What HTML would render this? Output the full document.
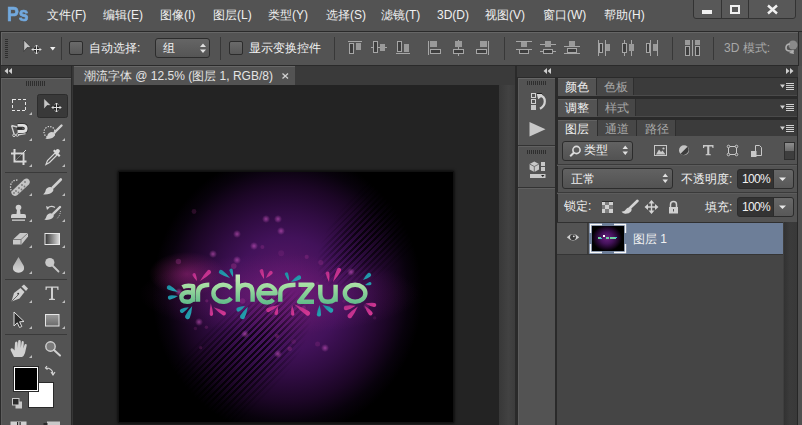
<!DOCTYPE html>
<html><head><meta charset="utf-8">
<style>
*{margin:0;padding:0;box-sizing:border-box}
html,body{width:802px;height:425px;overflow:hidden;background:#535353;font-family:"Liberation Sans",sans-serif;position:relative}
.a{position:absolute}
.t{position:absolute;white-space:nowrap;font-size:12px;line-height:14px;color:#f0f0f0}
svg{position:absolute;overflow:visible}
</style></head><body>

<!-- MENU BAR -->
<div class="a" style="left:0;top:0;width:802px;height:31px;background:#535353"></div>
<div class="t" style="left:7px;top:3px;font-size:21px;line-height:21px;font-weight:bold;color:#72a9de;-webkit-text-stroke:0.7px #72a9de;transform:scaleX(0.84);transform-origin:0 0">Ps</div>
<div class="t" style="left:47px;top:8px">文件(F)</div>
<div class="t" style="left:103px;top:8px">编辑(E)</div>
<div class="t" style="left:160px;top:8px">图像(I)</div>
<div class="t" style="left:213px;top:8px">图层(L)</div>
<div class="t" style="left:268px;top:8px">类型(Y)</div>
<div class="t" style="left:326px;top:8px">选择(S)</div>
<div class="t" style="left:381px;top:8px">滤镜(T)</div>
<div class="t" style="left:437px;top:8px">3D(D)</div>
<div class="t" style="left:485px;top:8px">视图(V)</div>
<div class="t" style="left:543px;top:8px">窗口(W)</div>
<div class="t" style="left:604px;top:8px">帮助(H)</div>

<!-- window buttons -->
<div class="a" style="left:693px;top:-2px;width:103px;height:21px;border:1px solid #333;border-radius:0 0 3px 3px;background:#585858"></div>
<div class="a" style="left:721px;top:0;width:1px;height:18px;background:#333"></div>
<div class="a" style="left:748px;top:0;width:1px;height:18px;background:#333"></div>
<div class="a" style="left:702px;top:10px;width:10px;height:4px;background:#f0f0f0"></div>
<div class="a" style="left:730px;top:5px;width:10px;height:9px;border:2px solid #f0f0f0"></div>
<svg style="left:767px;top:5px" width="11" height="9"><path d="M1 0.5 L10 8.5 M10 0.5 L1 8.5" stroke="#f0f0f0" stroke-width="2.4"/></svg>

<div class="a" style="left:0;top:31px;width:802px;height:1px;background:#2a2a2a"></div>

<!-- OPTIONS BAR -->
<div class="a" style="left:0;top:32px;width:802px;height:393px;background:#2a2a2a"></div>
<div class="a" style="left:1px;top:32px;width:797px;height:33px;background:#535353;border-top:1px solid #666;border-left:1px solid #666"></div>
<div class="a" style="left:798px;top:32px;width:4px;height:34px;background:#4c4c4c;border-left:1px solid #2a2a2a"></div>


<!-- options content -->
<svg style="left:0;top:0" width="802" height="425" shape-rendering="crispEdges">
 <g fill="#2e2e2e">
  <rect x="5" y="39" width="3" height="1"/><rect x="5" y="41" width="3" height="1"/><rect x="5" y="43" width="3" height="1"/><rect x="5" y="45" width="3" height="1"/><rect x="5" y="47" width="3" height="1"/><rect x="5" y="49" width="3" height="1"/><rect x="5" y="51" width="3" height="1"/><rect x="5" y="53" width="3" height="1"/><rect x="5" y="55" width="3" height="1"/><rect x="5" y="57" width="3" height="1"/>
 </g>
 <!-- separators -->
 <g fill="#383838">
  <rect x="61" y="37" width="1" height="23"/><rect x="220" y="37" width="1" height="23"/><rect x="334" y="37" width="1" height="23"/><rect x="504" y="37" width="1" height="23"/><rect x="672" y="37" width="1" height="23"/><rect x="713" y="37" width="1" height="23"/>
 </g>
 <!-- align icons -->
 <g fill="#a6a6a6">
  <rect x="348" y="41" width="14" height="1"/>
  <rect x="371" y="47" width="16" height="1"/>
  <rect x="396" y="53" width="14" height="1"/>
  <rect x="428" y="41" width="1" height="14"/>
  <rect x="458" y="40" width="1" height="16"/>
  <rect x="488" y="41" width="1" height="14"/>
  <rect x="516" y="41" width="16" height="1"/><rect x="516" y="49" width="16" height="1"/>
  <rect x="540" y="44" width="16" height="1"/><rect x="540" y="51" width="16" height="1"/>
  <rect x="564" y="46" width="16" height="1"/><rect x="564" y="53" width="16" height="1"/>
  <rect x="598" y="40" width="1" height="16"/><rect x="605" y="40" width="1" height="16"/>
  <rect x="624" y="40" width="1" height="16"/><rect x="631" y="40" width="1" height="16"/>
  <rect x="650" y="40" width="1" height="16"/><rect x="657" y="40" width="1" height="16"/>
  <rect x="692" y="40" width="1" height="16"/>
 </g>
 <g fill="#9a9a9a">
  <rect x="356" y="43" width="5" height="7"/>
  <rect x="380" y="44" width="5" height="7"/>
  <rect x="404" y="44" width="5" height="8"/>
  <rect x="430" y="41" width="7" height="6"/>
  <rect x="455" y="41" width="7" height="6"/>
  <rect x="480" y="41" width="7" height="6"/>
  <rect x="521" y="42" width="6" height="5"/>
  <rect x="545" y="41" width="6" height="6"/>
  <rect x="569" y="41" width="6" height="5"/>
  <rect x="606" y="44" width="4" height="7"/>
  <rect x="629" y="44" width="5" height="7"/>
  <rect x="653" y="44" width="4" height="7"/>
  <rect x="685" y="40" width="5" height="5"/><rect x="695" y="40" width="5" height="5"/>
 </g>
 <g fill="#3e3e3e" stroke="#a6a6a6" stroke-width="1" shape-rendering="auto">
  <rect x="349.5" y="43.5" width="4" height="10"/>
  <rect x="373.5" y="41.5" width="4" height="11"/>
  <rect x="397.5" y="41.5" width="4" height="10"/>
  <rect x="430.5" y="49.5" width="10" height="4"/>
  <rect x="453.5" y="49.5" width="10" height="4"/>
  <rect x="476.5" y="49.5" width="10" height="4"/>
  <rect x="519.5" y="49.5" width="9" height="4"/>
  <rect x="543.5" y="49.5" width="9" height="4"/>
  <rect x="567.5" y="48.5" width="9" height="4"/>
  <rect x="599.5" y="43.5" width="3" height="9"/>
  <rect x="622.5" y="43.5" width="4" height="9"/>
  <rect x="646.5" y="43.5" width="3" height="9"/>
  <rect x="685.5" y="46.5" width="4" height="9"/><rect x="695.5" y="46.5" width="4" height="9"/>
 </g>
 <!-- move tool icon -->
 <g shape-rendering="auto">
  <path d="M23.8 40 L31.2 47.6 L27 47.6 L23.8 51.4 Z" fill="#c6c6c6" stroke="#222" stroke-width="0.6"/>
  <path d="M36.5 45 V54 M32 49.5 H41" stroke="#222" stroke-width="2.6"/>
  <path d="M36.5 45 V54 M32 49.5 H41" stroke="#dedede" stroke-width="1"/>
  <path d="M35 46.5 L36.5 45 L38 46.5 M35 52.5 L36.5 54 L38 52.5 M33.5 48 L32 49.5 L33.5 51 M39.5 48 L41 49.5 L39.5 51" stroke="#dedede" stroke-width="1" fill="none"/>
  <path d="M50 47 L55.5 47 L52.75 50.5 Z" fill="#f0f0f0"/>
 </g>
 <!-- auto align 3D icon -->
 <g shape-rendering="auto">
  <circle cx="793" cy="45" r="4.5" fill="#8a8a8a"/>
  <path d="M786 48 Q786 44 790 44 M786 48 Q786 51 790 51 L794 51" stroke="#b0b0b0" stroke-width="1.6" fill="none"/>
  <path d="M789 53 L793 50 L794 54 Z" fill="#b0b0b0"/>
 </g>
</svg>
<!-- checkboxes -->
<div class="a" style="left:69px;top:41px;width:14px;height:14px;border:1px solid #2c2c2c;border-radius:2px;background:linear-gradient(#6a6a6a,#585858)"></div>
<div class="a" style="left:229px;top:41px;width:14px;height:14px;border:1px solid #2c2c2c;border-radius:2px;background:linear-gradient(#6a6a6a,#585858)"></div>
<div class="t" style="left:89px;top:41px">自动选择:</div>
<div class="a" style="left:155px;top:38px;width:55px;height:20px;border:1px solid #2c2c2c;border-radius:3px;background:linear-gradient(#656565,#555555)"></div>
<div class="t" style="left:163px;top:41px">组</div>
<svg style="left:200px;top:43px" width="6" height="11"><path d="M0 4 L3 0.5 L6 4 Z M0 6.5 L3 10 L6 6.5 Z" fill="#e0e0e0"/></svg>
<div class="t" style="left:249px;top:41px">显示变换控件</div>
<div class="t" style="left:724px;top:41px;color:#a8a8a8">3D 模式:</div>


<!-- LEFT TOOLBAR -->
<div class="a" style="left:1px;top:66px;width:70px;height:12px;background:#393939;border-bottom:1px solid #2a2a2a"></div>
<svg style="left:4px;top:68px" width="10" height="7"><path d="M0.5 3 L4 0 L4 6 Z M4.5 3 L8 0 L8 6 Z" fill="#cfcfcf"/></svg>
<div class="a" style="left:1px;top:78px;width:70px;height:347px;background:#535353;border-top:1px solid #666;border-left:1px solid #5e5e5e"></div>


<!-- TOOLBAR ICONS -->
<svg style="left:0;top:0" width="802" height="425">
 <g fill="#2e2e2e">
  <rect x="26" y="81" width="1" height="5"/><rect x="28" y="81" width="1" height="5"/><rect x="30" y="81" width="1" height="5"/><rect x="32" y="81" width="1" height="5"/><rect x="34" y="81" width="1" height="5"/><rect x="36" y="81" width="1" height="5"/><rect x="38" y="81" width="1" height="5"/><rect x="40" y="81" width="1" height="5"/><rect x="42" y="81" width="1" height="5"/><rect x="44" y="81" width="1" height="5"/>
 </g>
 <g fill="#3a3a3a">
  <rect x="5" y="172" width="62" height="1"/><rect x="5" y="279" width="62" height="1"/><rect x="5" y="334" width="62" height="1"/>
 </g>
 <g fill="#bdbdbd"><path d="M29 115 H32 V112 Z"/><path d="M29 141 H32 V138 Z"/><path d="M62 141 H65 V138 Z"/><path d="M29 167 H32 V164 Z"/><path d="M62 167 H65 V164 Z"/><path d="M29 196 H32 V193 Z"/><path d="M62 196 H65 V193 Z"/><path d="M29 222 H32 V219 Z"/><path d="M62 222 H65 V219 Z"/><path d="M29 248 H32 V245 Z"/><path d="M62 248 H65 V245 Z"/><path d="M29 274 H32 V271 Z"/><path d="M62 274 H65 V271 Z"/><path d="M29 303 H32 V300 Z"/><path d="M62 303 H65 V300 Z"/><path d="M29 329 H32 V326 Z"/><path d="M62 329 H65 V326 Z"/><path d="M29 358 H32 V355 Z"/></g>
 <!-- marquee -->
 <rect x="12.5" y="99.5" width="13" height="11" fill="none" stroke="#e6e6e6" stroke-width="1" stroke-dasharray="3 2" shape-rendering="crispEdges"/>
 <!-- move selected -->
 <rect x="37.5" y="94.5" width="30" height="23" rx="2" fill="#393939" stroke="#2c2c2c"/>
 <path d="M43.8 98.2 L51.2 105.6 L47 105.6 L43.8 109.4 Z" fill="#c6c6c6" stroke="#1e1e1e" stroke-width="0.6"/>
 <path d="M56.5 103 V112 M52 107.5 H61" stroke="#1e1e1e" stroke-width="2.6"/>
 <path d="M56.5 103 V112 M52 107.5 H61" stroke="#dedede" stroke-width="1"/>
 <path d="M55 104.5 L56.5 103 L58 104.5 M55 110.5 L56.5 112 L58 110.5 M53.5 106 L52 107.5 L53.5 109 M59.5 106 L61 107.5 L59.5 109" stroke="#dedede" stroke-width="1" fill="none"/>
 <!-- magnetic lasso -->
 <path d="M11.5 125.5 L14.5 135.5 L25.5 133.5 M11.5 125.5 L17.5 127" fill="none" stroke="#d0d0d0" stroke-width="1.3"/>
 <path d="M17.5 125.3 H22.8 Q26.2 125.3 26.2 128.4 Q26.2 131.5 22.8 131.5 H17.5" fill="none" stroke="#2a2a2a" stroke-width="4.2"/>
 <path d="M17.5 125.3 H22.8 Q26.2 125.3 26.2 128.4 Q26.2 131.5 22.8 131.5 H17.5" fill="none" stroke="#e0e0e0" stroke-width="2.8"/>
 <rect x="17" y="127.6" width="5" height="1.6" fill="#2a2a2a"/>
 <circle cx="14" cy="135.3" r="1.3" fill="#535353" stroke="#d0d0d0" stroke-width="1"/><circle cx="17.3" cy="135" r="1.3" fill="#535353" stroke="#d0d0d0" stroke-width="1"/>
 <!-- quick selection -->
 <circle cx="49.5" cy="132" r="5.5" fill="none" stroke="#e0e0e0" stroke-width="1.2" stroke-dasharray="1.3 1.3"/>
 <path d="M61.5 125.5 L54.5 132.5" stroke="#d0d0d0" stroke-width="2.4" stroke-linecap="round"/>
 <path d="M54 132.8 C51.7 131 48 132.8 47.4 135.5 C47 137.2 46.2 138.2 45.2 138.8 C49 139.2 52.8 138.5 54.7 135.8 C55.4 134.7 55.1 133.6 54 132.8 Z" fill="#d0d0d0"/>
 <!-- crop -->
 <path d="M14.5 149 V161.5 H26.5 M11 153.5 H23.5 V165" fill="none" stroke="#d8d8d8" stroke-width="2"/>
 <path d="M15.5 160.5 L26 150" stroke="#d8d8d8" stroke-width="1"/>
 <path d="M15.5 154.5 H22.5 V160.5 H15.5 Z" fill="#3a3a3a" opacity="0.6"/>
 <!-- eyedropper -->
 <path d="M46 164.5 L47.5 160.5 L55 153 L57 155 L49.5 162.5 Z" fill="none" stroke="#d8d8d8" stroke-width="1.2"/>
 <path d="M53 151 L59 157 L60.5 155.5 L58.5 153.5 Q61 151 59 149.5 Q57.5 148.2 55.5 150.5 L54.5 149.5 Z" fill="#d8d8d8"/>
 <!-- healing -->
 <path d="M17.5 180 Q11 180 10.5 186.5 Q10.5 191 13 193" fill="none" stroke="#e0e0e0" stroke-width="1.2" stroke-dasharray="1.3 1.3"/>
 <path d="M12.5 190.5 L24 179.5 Q27 177.5 29 179.8 Q30.8 182 28.8 184.6 L17.5 195 Q14.5 197 12.3 194.8 Q10.5 192.5 12.5 190.5 Z" fill="#c4c4c4"/>
 <g fill="#777"><circle cx="16" cy="191" r="0.9"/><circle cx="19" cy="188" r="0.9"/><circle cx="22" cy="185" r="0.9"/><circle cx="25" cy="182" r="0.9"/><circle cx="18.5" cy="192.5" r="0.9"/><circle cx="21.5" cy="189.5" r="0.9"/><circle cx="24.5" cy="186.5" r="0.9"/><circle cx="14" cy="193" r="0.9"/></g>
 <!-- brush -->
 <path d="M60.8 179.5 L52.8 187.5" stroke="#d0d0d0" stroke-width="2.6" stroke-linecap="round"/>
 <path d="M52.3 187.8 C50 186 46.2 187.8 45.6 190.6 C45.2 192.4 44.4 193.6 43.2 194.4 C47 194.8 51 194 53 191.2 C53.8 190 53.4 188.8 52.3 187.8 Z" fill="#d0d0d0"/>
 <!-- stamp -->
 <circle cx="18.5" cy="207.5" r="2.8" fill="#d0d0d0"/>
 <path d="M17 209 H20 L20.5 214 H24 Q26 214 26 216 V218 H11 V216 Q11 214 13 214 H16.5 Z" fill="#d0d0d0"/>
 <rect x="12" y="219.5" width="13" height="1.3" fill="#d0d0d0"/>
 <!-- history brush -->
 <path d="M60 207 L53.3 213.7" stroke="#d0d0d0" stroke-width="2.4" stroke-linecap="round"/>
 <path d="M52.8 214 C50.5 212.3 47 214 46.4 216.6 C46 218.2 45.2 219.2 44.2 219.8 C47.8 220.2 51.5 219.5 53.4 216.9 C54.1 215.8 53.8 214.8 52.8 214 Z" fill="#d0d0d0"/>
 <path d="M55 207.5 Q51 205 47.5 208" fill="none" stroke="#d0d0d0" stroke-width="1.2"/>
 <path d="M46 206 L47 210 L49.5 207.5 Z" fill="#d0d0d0"/>
 <path d="M60.5 211 Q60 216 57 218.5" fill="none" stroke="#d0d0d0" stroke-width="1" stroke-dasharray="1 1"/>
 <!-- eraser -->
 <path d="M13 239.5 L20 233 H28 L28 236.5 L21.5 244.5 H13 Z" fill="#c8c8c8"/>
 <path d="M13 239.5 H21 L28 233 M21 239.5 V244.5" fill="none" stroke="#6a6a6a" stroke-width="0.8"/>
 <!-- gradient -->
 <rect x="44.5" y="233" width="15.5" height="12" fill="#e8e8e8"/>
 <rect x="45.5" y="234" width="13.5" height="10" fill="url(#ggrad)"/>
 <defs><linearGradient id="ggrad" x1="0" x2="1"><stop offset="0" stop-color="#3a3a3a"/><stop offset="1" stop-color="#d8d8d8"/></linearGradient>
 <linearGradient id="grect" x1="0" y1="0" x2="0" y2="1"><stop offset="0" stop-color="#9a9a9a"/><stop offset="1" stop-color="#6a6a6a"/></linearGradient>
 <linearGradient id="gdrop" x1="0" y1="0" x2="0" y2="1"><stop offset="0" stop-color="#a8a8a8"/><stop offset="1" stop-color="#d8d8d8"/></linearGradient></defs>
 <!-- blur drop -->
 <path d="M18.5 257 Q15 263 13.2 266 Q12 270.5 15.5 272 Q18.5 273.3 21.5 272 Q25 270.5 23.8 266 Q22 263 18.5 257 Z" fill="url(#gdrop)"/>
 <!-- dodge -->
 <circle cx="49.8" cy="262.5" r="4.6" fill="#c8c8c8"/>
 <path d="M52.5 265.5 L58.5 271.5" stroke="#c8c8c8" stroke-width="1.8" stroke-linecap="round"/>
 <!-- pen -->
 <path d="M11.5 301.5 L14 293 L20.5 288 L24.5 292 L19.5 298.5 Z" fill="#d0d0d0"/>
 <path d="M21.5 286.5 L24 284.5 L28 288.5 L26 291 Z" fill="#d0d0d0"/>
 <circle cx="18.2" cy="293.8" r="1" fill="#3a3a3a"/>
 <path d="M11.8 301.2 L18 295" stroke="#3a3a3a" stroke-width="0.7"/>
 <!-- type T -->
 <path d="M45.5 286.5 H58.5 V290 H57.5 L57 287.8 H53 V298.5 L55 298.9 V300 H49 V298.9 L51 298.5 V287.8 H47 L46.5 290 H45.5 Z" fill="#d0d0d0"/>
 <!-- path select -->
 <path d="M14 312 V326 L17.3 322.8 L19.5 327.5 L21.8 326.5 L19.6 321.8 L24 321.5 Z" fill="#2a2a2a" stroke="#e0e0e0" stroke-width="1"/>
 <!-- rectangle -->
 <rect x="45.5" y="314.5" width="13.5" height="11.5" fill="url(#grect)" stroke="#e6e6e6" stroke-width="1"/>
 <!-- hand -->
 <path d="M14 357 Q12 353 10.8 350.5 Q10 348.5 11.5 348.2 Q13 348 14.5 350.5 L15 343 Q15.2 341.5 16.3 341.5 Q17.5 341.5 17.6 343 L17.8 348 L18.2 341 Q18.4 340 19.5 340 Q20.6 340 20.7 341.2 L20.8 348 L21.6 342 Q21.9 341 22.9 341.1 Q23.9 341.3 23.8 342.5 L23.4 348.5 L24.5 344.8 Q25 343.8 26 344 Q27 344.4 26.7 345.5 L25 353 Q24 356 22 357 Z" fill="#d0d0d0"/>
 <!-- zoom -->
 <circle cx="50.5" cy="346.5" r="4.7" fill="#7a7a7a" stroke="#d0d0d0" stroke-width="1.4"/>
 <path d="M54 350 L60 355.5" stroke="#d0d0d0" stroke-width="2" stroke-linecap="round"/>
 <!-- swap -->
 <path d="M47 366 L45.5 368 L47.5 369.5 M45.8 368 Q52 368 53 373.5 M51 372 L53 375 L55 372" fill="none" stroke="#d8d8d8" stroke-width="1.1"/>
 <!-- default colors -->
 <rect x="15.5" y="401.5" width="6.5" height="7" fill="#c8c8c8"/>
 <rect x="12.5" y="398.5" width="6.5" height="6.5" fill="#2a2a2a" stroke="#c8c8c8" stroke-width="1"/>
 <!-- quick mask -->
 <rect x="10.5" y="421.5" width="16" height="8" fill="#d0d0d0"/>
 <rect x="17" y="422" width="1.2" height="3" fill="#2a2a2a"/><rect x="19.5" y="422" width="1.2" height="3" fill="#2a2a2a"/>
 <rect x="47" y="421.5" width="13" height="8" fill="#c8c8c8"/>
 <rect x="43.5" y="423" width="4" height="5" fill="#2a2a2a"/>
</svg>
<!-- colors -->
<div class="a" style="left:28px;top:382px;width:26px;height:26px;background:#fff;border:1px solid #2a2a2a"></div>
<div class="a" style="left:14px;top:367px;width:24px;height:24px;background:#000;border:1px solid #fff;box-shadow:0 0 0 1px #2a2a2a"></div>

<!-- DOC AREA -->
<div class="a" style="left:72px;top:66px;width:1px;height:359px;background:#363636"></div>
<div class="a" style="left:73px;top:66px;width:442px;height:19px;background:#3a3a3a"></div>
<div class="a" style="left:74px;top:66px;width:221px;height:19px;background:#535353;border-top:1px solid #666"></div>
<div class="t" style="left:84px;top:69px;color:#e4e4e4">潮流字体 @ 12.5% (图层 1, RGB/8)</div>
<svg style="left:282px;top:73px" width="7" height="6"><path d="M0.5 0.5 L6 5.5 M6 0.5 L0.5 5.5" stroke="#d0d0d0" stroke-width="1.3"/></svg>
<div class="a" style="left:73px;top:85px;width:426px;height:340px;background:#232323"></div>
<div class="a" style="left:499px;top:85px;width:16px;height:340px;background:linear-gradient(90deg,#383838,#424242 60%,#3c3c3c)"></div>

<!-- RIGHT ICON COLUMN -->
<div class="a" style="left:517px;top:66px;width:281px;height:12px;background:#393939;border-bottom:1px solid #2a2a2a"></div>
<svg style="left:543px;top:68px" width="10" height="7"><path d="M0.5 3 L4 0 L4 6 Z M4.5 3 L8 0 L8 6 Z" fill="#cfcfcf"/></svg>
<svg style="left:786px;top:68px" width="10" height="7"><path d="M7.5 3 L4 0 L4 6 Z M3.5 3 L0 0 L0 6 Z" fill="#cfcfcf"/></svg>
<div class="a" style="left:518px;top:78px;width:38px;height:347px;background:#535353;border-left:1px solid #5e5e5e;border-top:1px solid #666"></div>

<!-- MAIN PANEL -->
<div class="a" style="left:557px;top:77px;width:241px;height:348px;background:#2a2a2a"></div>
<div class="a" style="left:558px;top:78px;width:239px;height:18px;background:#3b3b3b;border-bottom:1px solid #4a4a4a"></div>
<div class="a" style="left:558px;top:78px;width:38px;height:18px;background:#535353;border-top:1px solid #616161"></div>
<div class="a" style="left:596px;top:78px;width:38px;height:17px;background:#474747;border-left:1px solid #2e2e2e;border-right:1px solid #2e2e2e"></div>
<div class="t" style="left:565px;top:80px">颜色</div>
<div class="t" style="left:604px;top:80px;color:#a8a8a8">色板</div>

<div class="a" style="left:558px;top:99px;width:239px;height:18px;background:#3b3b3b;border-bottom:1px solid #4a4a4a"></div>
<div class="a" style="left:558px;top:99px;width:39px;height:18px;background:#535353;border-top:1px solid #616161"></div>
<div class="a" style="left:597px;top:99px;width:39px;height:17px;background:#474747;border-left:1px solid #2e2e2e;border-right:1px solid #2e2e2e"></div>
<div class="t" style="left:565px;top:101px">调整</div>
<div class="t" style="left:605px;top:101px;color:#a8a8a8">样式</div>

<div class="a" style="left:558px;top:120px;width:239px;height:16px;background:#3b3b3b"></div>
<div class="a" style="left:597px;top:120px;width:40px;height:16px;background:#474747;border-left:1px solid #2e2e2e;border-right:1px solid #2e2e2e"></div>
<div class="a" style="left:637px;top:120px;width:39px;height:16px;background:#474747;border-right:1px solid #2e2e2e"></div>
<div class="a" style="left:558px;top:120px;width:39px;height:17px;background:#535353;border-top:1px solid #616161"></div>
<div class="t" style="left:565px;top:122px">图层</div>
<div class="t" style="left:605px;top:122px;color:#a8a8a8">通道</div>
<div class="t" style="left:645px;top:122px;color:#a8a8a8">路径</div>
<div class="a" style="left:558px;top:136px;width:239px;height:289px;background:#535353"></div>

<!-- right edge column -->
<div class="a" style="left:798px;top:66px;width:4px;height:359px;background:#4f4f4f"></div>
<svg style="left:0;top:0" width="802" height="425">
 <g fill="#2e2e2e">
  <rect x="527" y="81" width="1" height="4"/><rect x="529" y="81" width="1" height="4"/><rect x="531" y="81" width="1" height="4"/><rect x="533" y="81" width="1" height="4"/><rect x="535" y="81" width="1" height="4"/><rect x="537" y="81" width="1" height="4"/><rect x="539" y="81" width="1" height="4"/><rect x="541" y="81" width="1" height="4"/><rect x="543" y="81" width="1" height="4"/><rect x="545" y="81" width="1" height="4"/>
  <rect x="527" y="150" width="1" height="4"/><rect x="529" y="150" width="1" height="4"/><rect x="531" y="150" width="1" height="4"/><rect x="533" y="150" width="1" height="4"/><rect x="535" y="150" width="1" height="4"/><rect x="537" y="150" width="1" height="4"/><rect x="539" y="150" width="1" height="4"/><rect x="541" y="150" width="1" height="4"/><rect x="543" y="150" width="1" height="4"/><rect x="545" y="150" width="1" height="4"/>
 </g>
 <rect x="518" y="145" width="38" height="1" fill="#333"/><rect x="518" y="146" width="38" height="1" fill="#616161"/>
 <rect x="518" y="187" width="38" height="1" fill="#333"/><rect x="518" y="188" width="38" height="1" fill="#616161"/>
 <!-- history -->
 <rect x="531.5" y="93.5" width="4" height="4" fill="none" stroke="#d0d0d0"/>
 <rect x="531.5" y="99.5" width="4" height="4" fill="none" stroke="#d0d0d0"/>
 <rect x="531" y="105" width="5" height="5" fill="#c8c8c8"/>
 <path d="M539.5 95.6 Q544.8 96 544.8 101.5 Q544.8 106 540 108.8" fill="none" stroke="#d4d4d4" stroke-width="2.2"/>
 <path d="M537 93 H542 V94 H537 Z" fill="#222"/>
 <path d="M536.8 94 L542 94 L541.2 97 L538.2 99.2 Z" fill="#d4d4d4"/>
 <!-- play -->
 <path d="M529.5 122 L545.5 129.2 L529.5 136.4 Z" fill="#c8c8c8"/>
 <!-- 3D -->
 <path d="M534.3 161.5 L539 164 V169.5 L534.3 172 L529.6 169.5 V164 Z" fill="#c8c8c8"/>
 <path d="M529.6 164 L534.3 166.5 L539 164 M534.3 166.5 V172" fill="none" stroke="#5a5a5a" stroke-width="0.8"/>
 <rect x="541" y="162" width="4" height="4" fill="#c8c8c8"/><rect x="541" y="167" width="4" height="4" fill="#c8c8c8"/>
 <rect x="530" y="174" width="15.5" height="4" fill="#c8c8c8"/>
 <path d="M541 175 H544.5 L542.75 177 Z" fill="#222"/>
 <!-- panel menu icons -->
 <g id="pm">
  <path d="M780 84.5 H785 L782.5 88 Z" fill="#d0d0d0"/>
  <rect x="786" y="83" width="8" height="1" fill="#d0d0d0"/><rect x="786" y="85" width="8" height="1" fill="#d0d0d0"/><rect x="786" y="87" width="8" height="1" fill="#d0d0d0"/><rect x="786" y="89" width="8" height="1" fill="#d0d0d0"/>
 </g>
 <use href="#pm" y="21"/>
 <use href="#pm" y="42"/>
</svg>

<!-- LAYERS PANEL BODY -->
<div class="a" style="left:562px;top:141px;width:71px;height:20px;border:1px solid #2c2c2c;border-radius:3px;background:linear-gradient(#626262,#525252)"></div>
<svg style="left:569px;top:145px" width="13" height="12"><circle cx="7.5" cy="5" r="3.6" fill="none" stroke="#dcdcdc" stroke-width="1.6"/><path d="M5 7.5 L1.2 11.2" stroke="#dcdcdc" stroke-width="2"/></svg>
<div class="t" style="left:584px;top:143px">类型</div>
<svg style="left:622px;top:145px" width="7" height="11"><path d="M0.5 4 L3.25 0.5 L6 4 Z M0.5 6.5 L3.25 10 L6 6.5 Z" fill="#e0e0e0"/></svg>

<svg style="left:0;top:0" width="802" height="425">
 <!-- image icon -->
 <rect x="654.5" y="145.5" width="12" height="10" fill="none" stroke="#c8c8c8" stroke-width="1"/>
 <path d="M656 154.5 L659 149.5 L661 152 L662.5 150.5 L665.5 154.5 Z" fill="#c8c8c8"/>
 <circle cx="663.5" cy="148.5" r="1.1" fill="#c8c8c8"/>
 <!-- adjustment circle -->
 <circle cx="684" cy="150.2" r="5" fill="#c4c4c4"/>
 <path d="M687.5 146.7 A5 5 0 0 1 680.5 153.7 Z" fill="#3c3c3c"/>
 <!-- T -->
 <path d="M703 145 H713.5 V148 H712.5 L712 146.5 H709.3 V154 L710.8 154.3 V155.2 H705.7 V154.3 L707.2 154 V146.5 H704.5 L704 148 H703 Z" fill="#c8c8c8"/>
 <!-- transform -->
 <rect x="728.5" y="146.5" width="8" height="8" fill="none" stroke="#c8c8c8" stroke-width="1"/>
 <g fill="#535353" stroke="#c8c8c8" stroke-width="1"><circle cx="728.5" cy="146.5" r="1.3"/><circle cx="736.5" cy="146.5" r="1.3"/><circle cx="728.5" cy="154.5" r="1.3"/><circle cx="736.5" cy="154.5" r="1.3"/></g>
 <!-- smart object -->
 <path d="M755.5 145.5 H759.5 L761.5 147.5 V155.5 H755.5 Z" fill="none" stroke="#c8c8c8" stroke-width="1"/>
 <rect x="751" y="151" width="5.5" height="6" fill="#c8c8c8"/>
</svg>
<div class="a" style="left:784px;top:142px;width:11px;height:18px;border:1px solid #2e2e2e;background:#3e3e3e"></div>
<div class="a" style="left:785px;top:143px;width:9px;height:8px;background:linear-gradient(#8e8e8e,#6a6a6a)"></div>

<div class="a" style="left:557px;top:164px;width:240px;height:1px;background:#3a3a3a"></div>
<div class="a" style="left:557px;top:165px;width:240px;height:1px;background:#5c5c5c"></div>

<div class="a" style="left:562px;top:168px;width:111px;height:21px;border:1px solid #2c2c2c;border-radius:3px;background:linear-gradient(#626262,#525252)"></div>
<div class="t" style="left:571px;top:172px">正常</div>
<svg style="left:662px;top:173px" width="7" height="11"><path d="M0.5 4 L3.25 0.5 L6 4 Z M0.5 6.5 L3.25 10 L6 6.5 Z" fill="#e0e0e0"/></svg>
<div class="t" style="left:681px;top:172px">不透明度:</div>
<div class="a" style="left:737px;top:169px;width:57px;height:20px;border:1px solid #2c2c2c;border-radius:3px;background:#333"></div>
<div class="a" style="left:773px;top:170px;width:20px;height:18px;border-left:1px solid #2c2c2c;border-radius:0 2px 2px 0;background:linear-gradient(#686868,#585858)"></div>
<svg style="left:779px;top:177px" width="8" height="5"><path d="M0 0.5 H7 L3.5 4 Z" fill="#e8e8e8"/></svg>
<div class="t" style="left:742px;top:172px;letter-spacing:-0.7px">100%</div>

<div class="a" style="left:557px;top:192px;width:240px;height:1px;background:#3a3a3a"></div>
<div class="a" style="left:557px;top:193px;width:240px;height:1px;background:#5c5c5c"></div>

<div class="t" style="left:564px;top:199px">锁定:</div>
<svg style="left:0;top:0" width="802" height="425">
 <!-- checker -->
 <rect x="602" y="202" width="11" height="11" fill="#cfcfcf"/>
 <g fill="#7c7c7c" shape-rendering="crispEdges"><rect x="605" y="202" width="4" height="3"/><rect x="602" y="205" width="3" height="4"/><rect x="609" y="205" width="4" height="4"/><rect x="605" y="209" width="4" height="4"/></g>
 <rect x="602" y="201" width="11" height="1" fill="#2e2e2e"/>
 <!-- brush -->
 <path d="M637.5 200.8 L630 208" stroke="#d4d4d4" stroke-width="2.6" stroke-linecap="round"/>
 <path d="M621.5 211.5 Q624.5 212 625.8 209.5 Q627.5 206.8 630.5 207.8 Q632.5 209 631 211.5 Q629 214 625 213.8 Q622.5 213.5 621.5 211.5 Z" fill="#d4d4d4"/>
 <!-- move -->
 <path d="M651.5 201.5 V212.5 M646 207 H657" stroke="#d4d4d4" stroke-width="1.4"/>
 <path d="M648.5 203.5 L651.5 200 L654.5 203.5 Z M648.5 210.5 L651.5 214 L654.5 210.5 Z M648 204 L644.5 207 L648 210 Z M655 204 L658.5 207 L655 210 Z" fill="#d4d4d4"/>
 <!-- lock -->
 <path d="M670.5 207 V204.5 Q670.5 201.5 673.5 201.5 Q676.5 201.5 676.5 204.5 V207" fill="none" stroke="#d0d0d0" stroke-width="1.5"/>
 <rect x="669" y="207" width="9" height="6.5" fill="#d0d0d0"/>
 <rect x="673" y="209" width="1" height="2.5" fill="#535353"/>
</svg>
<div class="t" style="left:705px;top:200px">填充:</div>
<div class="a" style="left:737px;top:197px;width:57px;height:20px;border:1px solid #2c2c2c;border-radius:3px;background:#333"></div>
<div class="a" style="left:773px;top:198px;width:20px;height:18px;border-left:1px solid #2c2c2c;border-radius:0 2px 2px 0;background:linear-gradient(#686868,#585858)"></div>
<svg style="left:779px;top:205px" width="8" height="5"><path d="M0 0.5 H7 L3.5 4 Z" fill="#e8e8e8"/></svg>
<div class="t" style="left:742px;top:200px;letter-spacing:-0.7px">100%</div>

<!-- layer list -->
<div class="a" style="left:557px;top:222px;width:226px;height:203px;background:#454545;border-top:1px solid #303030"></div>
<div class="a" style="left:557px;top:223px;width:31px;height:32px;background:#535353;border-right:1px solid #3a3a3a"></div>
<div class="a" style="left:589px;top:223px;width:194px;height:31px;background:#6d7e98"></div>
<div class="a" style="left:557px;top:254px;width:226px;height:1px;background:#353535"></div>
<svg style="left:566px;top:232px" width="14" height="11"><path d="M0.8 5.2 Q7 -1.2 13.2 5.2 Q7 11.6 0.8 5.2 Z" fill="#cfcfcf"/><circle cx="7" cy="5.2" r="2.9" fill="#3a3a3a"/><circle cx="7.8" cy="4.3" r="0.9" fill="#e0e0e0"/></svg>
<div class="a" style="left:592px;top:226px;width:32px;height:25px;background:radial-gradient(ellipse 15px 13px at 15px 12px,#6a2280 0%,#44125a 45%,#1a0522 80%,#000 100%)"></div>
<svg style="left:589px;top:223px" width="38" height="31"><path d="M1.5 10 V1.5 H13 M25 1.5 H36.5 V10 M36.5 21 V29.5 H25 M13 29.5 H1.5 V21" fill="none" stroke="#f8f8f8" stroke-width="1.4"/>
<g fill="#70d0a0"><rect x="9" y="14" width="3" height="2"/><rect x="17" y="14" width="3" height="2"/><rect x="21" y="14" width="6" height="2"/></g><rect x="14" y="12" width="2" height="2" fill="#fff"/><rect x="11" y="15" width="2" height="1" fill="#40c0d0"/><rect x="26" y="14" width="2" height="1" fill="#40c0d0"/></svg>
<div class="t" style="left:633px;top:232px">图层 1</div>
<div class="a" style="left:783px;top:222px;width:15px;height:203px;background:linear-gradient(90deg,#323232,#3b3b3b 45%,#393939);border-left:1px solid #3e3e3e;border-right:1px solid #262626"></div>
<div class="a" style="left:555px;top:78px;width:2px;height:347px;background:#2a2a2a"></div>

<!-- CANVAS IMAGE -->
<div class="a" style="left:118px;top:171px;width:336px;height:252px;background:#111;box-shadow:0 0 3px #000"></div>
<div class="a" style="left:119px;top:172px;width:334px;height:250px;background:#000;overflow:hidden">
 <div class="a" style="left:0;top:0;width:334px;height:250px;background:radial-gradient(ellipse 135px 142px at 168px 122px,#5c1a6e 0%,#521664 20%,#42125a 40%,#300c42 58%,#1c0626 76%,#08020c 90%,#000 100%)"></div>
 <div class="a" style="left:0;top:0;width:334px;height:250px;background:radial-gradient(ellipse 38px 22px at 68px 102px,rgba(170,40,130,0.5),rgba(170,40,130,0) 100%),radial-gradient(ellipse 140px 40px at 160px 122px,rgba(130,30,130,0.45),rgba(130,30,130,0) 100%)"></div>
 <div class="a" style="left:181px;top:14px;width:160px;height:80px;transform:rotate(-45deg);background:repeating-linear-gradient(0deg,rgba(0,0,0,0) 0px,rgba(0,0,0,0) 2.3px,rgba(0,0,0,0.7) 2.3px,rgba(0,0,0,0.7) 4.4px);-webkit-mask-image:radial-gradient(ellipse 80px 40px at 50% 50%,#000 35%,rgba(0,0,0,0) 100%)"></div>
 <div class="a" style="left:15px;top:149px;width:200px;height:90px;transform:rotate(-45deg);background:repeating-linear-gradient(0deg,rgba(0,0,0,0) 0px,rgba(0,0,0,0) 2.3px,rgba(0,0,0,0.75) 2.3px,rgba(0,0,0,0.75) 4.6px);-webkit-mask-image:radial-gradient(ellipse 100px 45px at 50% 50%,#000 40%,rgba(0,0,0,0) 100%)"></div>
 <svg style="left:0;top:0" width="334" height="250">
  <defs>
   <linearGradient id="gx" gradientUnits="userSpaceOnUse" x1="0" y1="100" x2="0" y2="133"><stop offset="0" stop-color="#d0f0c0"/><stop offset="0.45" stop-color="#a0dca0"/><stop offset="1" stop-color="#5cb888"/></linearGradient>
   <linearGradient id="gt" x1="0" y1="0" x2="1" y2="1"><stop offset="0" stop-color="#1a8aa0"/><stop offset="1" stop-color="#28a8b4"/></linearGradient>
   <linearGradient id="gp" x1="0" y1="0" x2="1" y2="1"><stop offset="0" stop-color="#b02a88"/><stop offset="1" stop-color="#d83a94"/></linearGradient>
  </defs>
  <circle cx="153.9" cy="141.0" r="2.5" fill="#c040a0" opacity="0.13"/><circle cx="116.8" cy="108.4" r="1.6" fill="#c040a0" opacity="0.21"/><circle cx="225.0" cy="129.2" r="1.6" fill="#c040a0" opacity="0.14"/><circle cx="76.4" cy="156.5" r="1.7" fill="#c040a0" opacity="0.16"/><circle cx="75.0" cy="39.5" r="2.4" fill="#c040a0" opacity="0.19"/><circle cx="184.8" cy="115.9" r="2.8" fill="#c040a0" opacity="0.17"/><circle cx="185.0" cy="135.7" r="2.0" fill="#c040a0" opacity="0.27"/><circle cx="198.6" cy="171.9" r="2.5" fill="#c040a0" opacity="0.19"/><circle cx="149.1" cy="113.2" r="1.6" fill="#c040a0" opacity="0.16"/><circle cx="143.4" cy="74.9" r="2.0" fill="#c040a0" opacity="0.23"/><circle cx="123.6" cy="129.0" r="2.7" fill="#c040a0" opacity="0.25"/><circle cx="170.7" cy="176.8" r="2.3" fill="#c040a0" opacity="0.28"/><circle cx="162.2" cy="81.2" r="3.0" fill="#c040a0" opacity="0.14"/><circle cx="87.4" cy="155.3" r="1.7" fill="#c040a0" opacity="0.21"/><circle cx="247.2" cy="134.3" r="2.6" fill="#c040a0" opacity="0.22"/><circle cx="201.8" cy="90.5" r="2.5" fill="#c040a0" opacity="0.23"/><circle cx="114.8" cy="94.1" r="2.8" fill="#c040a0" opacity="0.29"/><circle cx="87.8" cy="128.8" r="1.6" fill="#c040a0" opacity="0.25"/><circle cx="187.7" cy="84.9" r="2.1" fill="#c040a0" opacity="0.24"/><circle cx="228.6" cy="125.1" r="1.8" fill="#c040a0" opacity="0.14"/><circle cx="255.7" cy="145.9" r="1.7" fill="#c040a0" opacity="0.16"/><circle cx="81.7" cy="175.7" r="1.6" fill="#c040a0" opacity="0.20"/><circle cx="59.4" cy="89.5" r="2.7" fill="#c040a0" opacity="0.28"/><circle cx="157.9" cy="163.9" r="2.0" fill="#c040a0" opacity="0.28"/><circle cx="198.4" cy="111.2" r="1.8" fill="#c040a0" opacity="0.16"/><circle cx="174.6" cy="169.6" r="2.4" fill="#c040a0" opacity="0.17"/><circle cx="225.3" cy="119.2" r="2.1" fill="#c040a0" opacity="0.22"/>
  <defs><radialGradient id="bk"><stop offset="0" stop-color="#e060d0" stop-opacity="0.55"/><stop offset="1" stop-color="#e060d0" stop-opacity="0"/></radialGradient></defs><circle cx="147" cy="47" r="4" fill="url(#bk)"/><circle cx="159" cy="47" r="4" fill="url(#bk)"/><circle cx="118" cy="62" r="4" fill="url(#bk)"/><circle cx="162" cy="59" r="4" fill="url(#bk)"/><circle cx="135" cy="74" r="4" fill="url(#bk)"/><circle cx="94" cy="82" r="4" fill="url(#bk)"/><circle cx="118" cy="88" r="4" fill="url(#bk)"/><circle cx="206" cy="176" r="4" fill="url(#bk)"/><circle cx="159" cy="182" r="4" fill="url(#bk)"/><circle cx="126" cy="162" r="4" fill="url(#bk)"/><circle cx="232" cy="100" r="4" fill="url(#bk)"/><circle cx="60" cy="120" r="4" fill="url(#bk)"/><circle cx="80" cy="150" r="4" fill="url(#bk)"/>
  <path d="M78.0 109.0 Q77.7 104.8 76.5 101.8 A1.7 1.7 0 0 0 73.5 103.2 Q75.0 106.1 78.0 109.0 Z" fill="url(#gp)"/><path d="M81.0 109.0 Q87.3 105.4 91.5 101.5 A2.125 2.125 0 0 0 88.5 98.5 Q84.6 102.7 81.0 109.0 Z" fill="url(#gp)"/><path d="M111.0 106.0 Q107.1 101.1 103.2 98.2 A2.125 2.125 0 0 0 100.8 101.8 Q105.0 104.3 111.0 106.0 Z" fill="url(#gt)"/><path d="M114.0 105.0 Q114.4 100.7 113.6 97.5 A1.7 1.7 0 0 0 110.4 98.5 Q111.4 101.6 114.0 105.0 Z" fill="url(#gt)"/><path d="M145.0 107.0 Q145.2 102.1 144.3 98.4 A1.87 1.87 0 0 0 140.7 99.6 Q142.0 103.1 145.0 107.0 Z" fill="url(#gp)"/><path d="M147.0 106.0 Q151.1 104.2 153.4 101.8 A1.9549999999999998 1.9549999999999998 0 0 0 150.6 99.2 Q148.4 101.8 147.0 106.0 Z" fill="url(#gp)"/><path d="M170.0 109.0 Q170.1 104.6 169.1 101.4 A1.7 1.7 0 0 0 165.9 102.6 Q167.2 105.7 170.0 109.0 Z" fill="url(#gt)"/><path d="M172.0 110.0 Q177.3 109.2 181.0 107.4 A2.125 2.125 0 0 0 179.0 103.6 Q175.5 105.9 172.0 110.0 Z" fill="url(#gt)"/><path d="M210.0 110.0 Q210.8 104.8 210.3 100.7 A1.87 1.87 0 0 0 206.7 101.3 Q207.5 105.3 210.0 110.0 Z" fill="url(#gp)"/><path d="M214.0 110.0 Q219.0 104.3 221.9 99.0 A2.125 2.125 0 0 0 218.1 97.0 Q215.6 102.5 214.0 110.0 Z" fill="url(#gp)"/><path d="M244.0 108.0 Q248.5 106.7 251.4 104.6 A2.125 2.125 0 0 0 248.6 101.4 Q246.1 103.8 244.0 108.0 Z" fill="url(#gt)"/><path d="M246.0 113.0 Q249.2 113.6 251.5 113.1 A1.7 1.7 0 0 0 250.5 109.9 Q248.3 110.7 246.0 113.0 Z" fill="url(#gt)"/><path d="M59.0 120.0 Q55.0 115.6 51.1 113.4 A2.38 2.38 0 0 0 48.9 117.6 Q53.1 119.4 59.0 120.0 Z" fill="url(#gt)"/><path d="M59.0 124.0 Q54.2 122.9 50.6 123.4 A2.125 2.125 0 0 0 51.4 127.6 Q55.0 126.7 59.0 124.0 Z" fill="url(#gt)"/><path d="M73.2 134.0 Q68.5 139.1 66.1 144.0 A2.55 2.55 0 0 0 70.7 146.0 Q72.7 141.0 73.2 134.0 Z" fill="url(#gt)"/><path d="M69.8 135.3 Q65.2 135.5 62.0 136.9 A2.125 2.125 0 0 0 64.0 140.7 Q66.9 138.9 69.8 135.3 Z" fill="url(#gt)"/><path d="M91.8 131.2 Q90.6 137.3 90.7 142.3 A1.7 1.7 0 0 0 94.1 142.1 Q93.7 137.2 91.8 131.2 Z" fill="url(#gp)"/><path d="M94.5 135.3 Q99.3 140.4 103.9 143.3 A2.125 2.125 0 0 0 106.1 139.7 Q101.2 137.1 94.5 135.3 Z" fill="url(#gp)"/><path d="M128.8 134.7 Q123.8 139.3 121.1 143.8 A2.55 2.55 0 0 0 125.5 146.2 Q127.8 141.4 128.8 134.7 Z" fill="url(#gt)"/><path d="M126.0 134.0 Q121.5 134.2 118.5 135.5 A2.125 2.125 0 0 0 120.5 139.3 Q123.3 137.6 126.0 134.0 Z" fill="url(#gt)"/><path d="M160.2 133.0 Q153.2 134.1 148.1 136.3 A2.125 2.125 0 0 0 149.9 140.1 Q154.8 137.6 160.2 133.0 Z" fill="url(#gp)"/><path d="M158.7 134.5 Q156.4 137.9 155.5 140.8 A1.7 1.7 0 0 0 158.9 141.6 Q159.4 138.5 158.7 134.5 Z" fill="url(#gp)"/><path d="M173.0 133.0 Q171.9 138.1 172.0 142.1 A1.7 1.7 0 0 0 175.4 141.9 Q174.9 137.8 173.0 133.0 Z" fill="url(#gp)"/><path d="M175.2 132.2 Q181.4 138.9 187.4 143.2 A2.38 2.38 0 0 0 190.0 139.2 Q183.8 135.4 175.2 132.2 Z" fill="url(#gp)"/><path d="M200.6 133.0 Q198.3 138.2 197.8 142.5 A2.125 2.125 0 0 0 202.0 142.9 Q202.1 138.5 200.6 133.0 Z" fill="url(#gt)"/><path d="M203.6 133.0 Q207.0 137.7 210.6 140.2 A2.38 2.38 0 0 0 213.2 136.2 Q209.3 134.0 203.6 133.0 Z" fill="url(#gt)"/><path d="M236.6 133.7 Q230.7 132.9 226.3 133.7 A2.38 2.38 0 0 0 227.3 138.3 Q231.7 137.1 236.6 133.7 Z" fill="url(#gp)"/><path d="M238.8 134.5 Q232.7 138.5 228.8 142.7 A2.38 2.38 0 0 0 232.4 145.7 Q235.9 141.2 238.8 134.5 Z" fill="url(#gp)"/><path d="M246.3 131.5 Q250.9 134.2 255.0 135.1 A2.125 2.125 0 0 0 255.6 130.9 Q251.6 130.4 246.3 131.5 Z" fill="url(#gp)"/><path d="M245.5 133.7 Q247.3 139.0 249.8 142.5 A2.125 2.125 0 0 0 253.2 139.9 Q250.3 136.6 245.5 133.7 Z" fill="url(#gp)"/>
  <g fill="none" stroke="url(#gx)" stroke-width="4.4" stroke-linecap="butt" stroke-linejoin="round"><path d="M 63.5 115.2 Q 67.5 112.8 74.2 114.2 V 129.8"/><path d="M 74.2 121.2 Q 65 118.5 62.4 124 Q 61.8 129.8 68.2 129.8 Q 73.2 129.8 74.2 125.5"/><path d="M 79 129.8 V 121 Q 79 112.8 90.3 112.8"/><path d="M 112.2 116.4 A 9.8 8.5 0 1 0 112.2 126.2"/><path d="M 118.8 102.5 V 129.8 M 118.8 121 Q 118.8 112.8 126.3 112.8 Q 133.6 112.8 133.6 121 V 129.8"/><path d="M 139.6 121.3 H 156.6 A 8.6 8.6 0 1 0 154.4 127.6"/><path d="M 161.3 129.8 V 121 Q 161.3 112.8 176.5 112.8"/><path d="M 179.5 112.8 H 193.5 L 180 129.8 H 195"/><path d="M 201.3 112.8 V 122 Q 201.3 129.8 209 129.8 Q 216.6 129.8 216.6 122 V 112.8 M 216.6 112.8 V 129.8"/><path d="M 225.8 121.3 A 10.3 8.5 0 1 0 246.4 121.3 A 10.3 8.5 0 1 0 225.8 121.3"/></g>
 </svg>
</div>

</body></html>
